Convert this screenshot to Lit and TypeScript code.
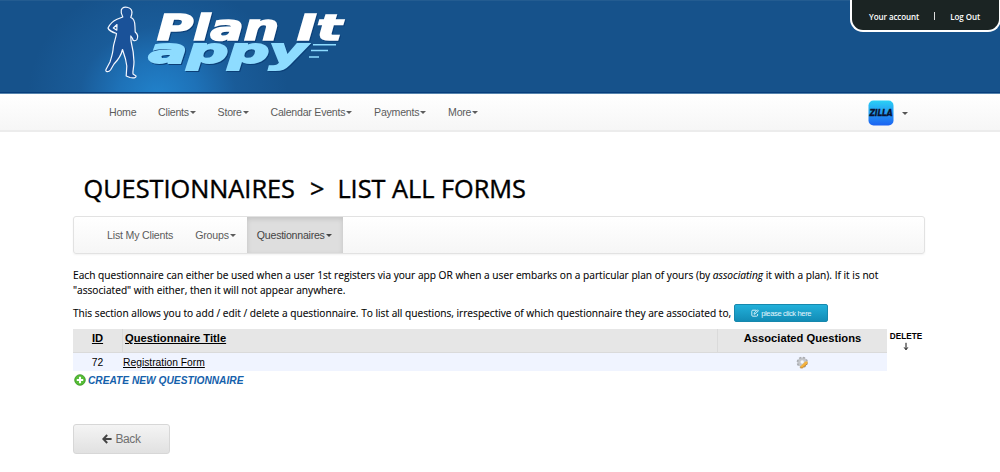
import { LitElement, html, svg, css } from "lit";
import { customElement, property } from "lit/decorators.js";

@customElement("brand-logo")
class BrandLogo extends LitElement {
  static styles = css`
    :host { display: block; width: 260px; height: 92px; }
    svg { display: block; }
    .word { font-family: "DejaVu Sans", sans-serif; font-style: italic; font-weight: bold; filter: drop-shadow(1px 1px 0.5px #0b3f78); }
    .top { font-size: 35.5px; fill: #fff; stroke: #fff; stroke-width: 1.6; }
    .low { font-size: 33px; fill: #8edcff; stroke: #8edcff; stroke-width: 1.9; }
  `;
  render() {
    const word = (cls: string, x: number, y: number, w: number, t: string) =>
      svg`<text class="word ${cls}" x=${x} y=${y} textLength=${w} lengthAdjust="spacingAndGlyphs">${t}</text>`;
    return html`<svg width="260" height="92" viewBox="100 0 260 92">
      <path d="M121.3 10C122 7.5 125 6.5 128 7.5C131.5 8.5 132.3 11 131.8 14L130.8 17.5C134.5 18.5 135 22 135 27L135.2 32C137.5 34 138.2 37 137 39.5C135.5 41.5 132.3 41 132.6 38.5L130.8 36L131 41C132.5 47 133.8 54 134 62C134 67 132.5 71 133 74L136 76C136.5 78 133 78.3 130 77.5L126.2 76L126.8 66L125.5 59L122.5 49.5C121 56 118 60 114 64L110.5 70C108.5 72.5 105 72 106 69.5L110 62C111.5 57 113 53 113.2 48C113.6 43 116 38 116.5 33.5C113 32.5 108.5 30 108 28C109.5 25 113 21 117 19.3L122.8 17C121.5 15 120.7 12.5 121.3 10ZM117 24.5L113.3 28L116.8 30.2Z"
        fill="#1a5299" stroke="#f4f8ff" stroke-width="1.2" stroke-linejoin="round"/>
      ${word("top", 157, 39.8, 122, "Plan")}
      ${word("top", 297, 39.8, 45, "It")}
      ${word("low", 148.5, 63, 158, "appy")}
      <path d="M313 44.7H336M311 50.5H328M309 57H319" stroke="#8edcff" stroke-width="1.5"/>
    </svg>`;
  }
}

@customElement("menu-link")
class MenuLink extends LitElement {
  @property() label = "";
  @property({ type: Boolean }) caret = false;
  static styles = css`
    :host { display: flex; align-items: center; white-space: nowrap; }
    .caret { border: 3px solid transparent; border-top-color: currentColor; border-bottom: 0; margin-left: 1px; margin-top: 1px; }
  `;
  render() {
    return html`<span>${this.label}</span>${this.caret ? html`<i class="caret"></i>` : ""}`;
  }
}

@customElement("app-root")
class AppRoot extends LitElement {
  static styles = css`
    :host { display: block; width: 1000px; height: 472px; overflow: hidden; background: #fff; color: #000; font: 11px "Open Sans", sans-serif; }
    * { box-sizing: border-box; }
    .banner { height: 94px; display: flex; justify-content: space-between; align-items: flex-start; padding-left: 100px;
      background: radial-gradient(ellipse 130px 115px at 158px 96px, #2182cb 0%, #1e72b8 30%, rgba(28,98,162,0.6) 60%, rgba(22,82,139,0) 100%), #16528b;
      border-bottom: 1px solid #5684ad; box-shadow: inset 0 -1px #073e7c, inset 0 1px #235c91; }
    .account { width: 151px; height: 32px; margin-right: -1px; border: 2px solid #fff; border-top: 0; border-radius: 0 0 13px 13px;
      background: #1b2423; color: #fff; display: flex; align-items: center; padding: 2px 0 0 17px; font: 600 8px "Open Sans", sans-serif; letter-spacing: -0.07px; white-space: nowrap; }
    .bar { width: 1px; height: 8px; background: #ddd; margin: 0 15px; }
    .nav { height: 38px; border-bottom: 2px solid #ececec; background: linear-gradient(#fff, #f6f6f6); display: flex; align-items: center;
      padding: 0 92px 0 109px; color: #5c5c5c; font: 10.6px "Liberation Sans", sans-serif; letter-spacing: -0.24px; }
    .links { display: flex; gap: 21.8px; flex: 1; }
    .avatar { display: block; margin: 2px 8px 0 0; }
    .caret { border: 3px solid transparent; border-top-color: #555; border-bottom: 0; margin-top: 2px; }
    .content { padding: 38px 75px 0 73px; }
    h1 { margin: 0 0 0 10.5px; height: 46px; line-height: 37px; font-size: 25.3px; font-weight: 400; -webkit-text-stroke: 0.4px #000; white-space: pre; display: flex; }
    .arrow { margin: 0 13px 0 15px; }
    .sub { height: 38px; border: 1px solid #e2e2e2; border-radius: 3px; background: linear-gradient(#fff, #f6f6f6); box-shadow: 0 1px 2px #0000000d;
      display: flex; align-items: stretch; padding-left: 33px; color: #5c5c5c; font: 10.6px "Liberation Sans", sans-serif; letter-spacing: -0.18px; }
    .groups { margin: 0 11px 0 22px; }
    .active { width: 96px; padding-left: 10px; background: #dedede; box-shadow: inset 0 2px 5px #00000020; color: #444; letter-spacing: -0.25px; }
    p { margin: 0; font-size: 10.17px; line-height: 14.7px; white-space: nowrap; -webkit-text-stroke: 0.1px #000; }
    .intro { margin-top: 14px; }
    .second { margin-top: 6px; height: 20px; display: flex; align-items: center; letter-spacing: -0.01px; }
    .info { width: 94px; height: 18px; margin-left: 3px; border: 1px solid #1688ad; border-radius: 2px; background: linear-gradient(#22b0da, #128cb6);
      color: #e4f6fc; font: 7.5px "Liberation Sans", sans-serif; -webkit-text-stroke: 0; letter-spacing: -0.35px; display: flex; align-items: center; justify-content: center; gap: 2px; }
    .listing { display: flex; align-items: flex-start; margin-top: 6px; font-family: "Liberation Sans", sans-serif; }
    .grid { display: grid; grid-template-columns: 49px 595px 170px; grid-template-rows: 24px 18px; font-size: 10.3px; }
    .head { background: #e6e6e6; border-bottom: 1px solid #dadada; font-weight: bold; font-size: 11.2px; padding-top: 3px; line-height: 13px; }
    .head + .head { border-left: 1px solid #dadada; }
    .title { padding-left: 2px; }
    .cell { background: #f0f4ff; display: flex; align-items: center; }
    .form { padding-left: 1px; }
    .mid { text-align: center; justify-content: center; }
    .link { text-decoration: underline; }
    .delete { width: 38px; text-align: center; font: bold 8.2px/10px "Liberation Sans", sans-serif; padding-top: 3px; }
    .down { display: block; margin: 0 auto; }
    .create { display: flex; align-items: center; gap: 2px; height: 18px; padding-left: 1px; color: #1561ab; font: italic bold 10.2px "Liberation Sans", sans-serif; white-space: nowrap; }
    .back { margin-top: 35px; width: 97px; height: 30px; border: 1px solid #d7d7d7; border-radius: 3px; background: linear-gradient(#f4f4f4, #e1e1e1);
      display: flex; align-items: center; justify-content: center; gap: 3px; color: #707070; font: 12px "Liberation Sans", sans-serif; letter-spacing: -0.4px; }
  `;

  render() {
    return html`
      <header class="banner">
        <brand-logo></brand-logo>
        <div class="account"><span>Your account</span><i class="bar"></i><span>Log Out</span></div>
      </header>
      <nav class="nav">
        <div class="links">
          <menu-link label="Home"></menu-link>
          ${["Clients", "Store", "Calendar Events", "Payments", "More"].map((l) => html`<menu-link label=${l} caret></menu-link>`)}
        </div>
        <svg class="avatar" width="26" height="26" viewBox="0 0 26 26">
          <defs><linearGradient id="sky" x2="0" y2="1"><stop stop-color="#2bd0f5"/><stop offset="1" stop-color="#1c62f2"/></linearGradient></defs>
          <rect x=".5" y=".5" width="25" height="25" rx="5" fill="url(#sky)"/>
          <text x="1.5" y="16.2" textLength="23" lengthAdjust="spacingAndGlyphs" font-family="DejaVu Sans" font-weight="bold" font-style="italic" font-size="8" fill="#0a1330" stroke="#0a1330" stroke-width=".3">ZILLA</text>
        </svg>
        <i class="caret"></i>
      </nav>
      <main class="content">
        <h1><span>QUESTIONNAIRES</span><span class="arrow">&gt;</span><span>LIST ALL FORMS</span></h1>
        <nav class="sub">
          <menu-link label="List My Clients"></menu-link>
          <menu-link class="groups" label="Groups" caret></menu-link>
          <menu-link class="active" label="Questionnaires" caret></menu-link>
        </nav>
        <p class="intro">Each questionnaire can either be used when a user 1st registers via your app OR when a user embarks on a particular plan of yours (by <em>associating</em> it with a plan). If it is not<br>"associated" with either, then it will not appear anywhere.</p>
        <p class="second"><span>This section allows you to add / edit / delete a questionnaire. To list all questions, irrespective of which questionnaire they are associated to,</span>
          <span class="info"><svg width="8" height="8" viewBox="0 0 8 8" fill="none" stroke="#e4f6fc" stroke-width=".9"><path d="M5 1.2H1.8Q.8 1.2.8 2.2V6.2Q.8 7.2 1.8 7.2H5.6Q6.6 7.2 6.6 6.2V5M3 5.2L3.3 3.9L6.4.8L7.4 1.8L4.3 4.9Z"/></svg>please click here</span></p>
        <section class="listing">
          <div class="grid">
            <div class="head mid"><span class="link">ID</span></div>
            <div class="head title"><span class="link">Questionnaire Title</span></div>
            <div class="head mid">Associated Questions</div>
            <div class="cell mid">72</div>
            <div class="cell form"><span class="link">Registration Form</span></div>
            <div class="cell mid"><svg width="13" height="13" viewBox="0 0 13 13">
              <circle cx="6.3" cy="6.3" r="4.9" fill="#c4c6ca" stroke="#a9abb0" stroke-width="1.6" stroke-dasharray="2.2 1.65"/>
              <circle cx="6.2" cy="6" r="1.7" fill="#f5f7fb"/>
              <path d="M3.6 11.3L9.4 5.4L11.8 5.5L11.2 8L6.2 12.3Z" fill="#f5b23c"/><path d="M4.2 11.8L6.2 12L11.2 8" fill="none" stroke="#b67b2b" stroke-width=".8"/></svg></div>
          </div>
          <div class="delete">DELETE<svg class="down" width="6" height="9" viewBox="0 0 6 9"><path d="M3 .8V7.2M1.2 5.4L3 7.8L4.8 5.4" fill="none" stroke="#111" stroke-width="1"/></svg></div>
        </section>
        <div class="create"><svg width="12" height="12" viewBox="0 0 12 12"><circle cx="6" cy="6" r="5.3" fill="#55bd35" stroke="#399623" stroke-width=".8"/><path d="M6 2.8V9.2M2.8 6H9.2" stroke="#fff" stroke-width="2.1"/></svg>CREATE NEW QUESTIONNAIRE</div>
        <div class="back"><svg width="10" height="10" viewBox="0 0 10 10"><path d="M9.6 5H2M5.2 1L1.3 5L5.2 9" fill="none" stroke="#444" stroke-width="2"/></svg>Back</div>
      </main>`;
  }
}
